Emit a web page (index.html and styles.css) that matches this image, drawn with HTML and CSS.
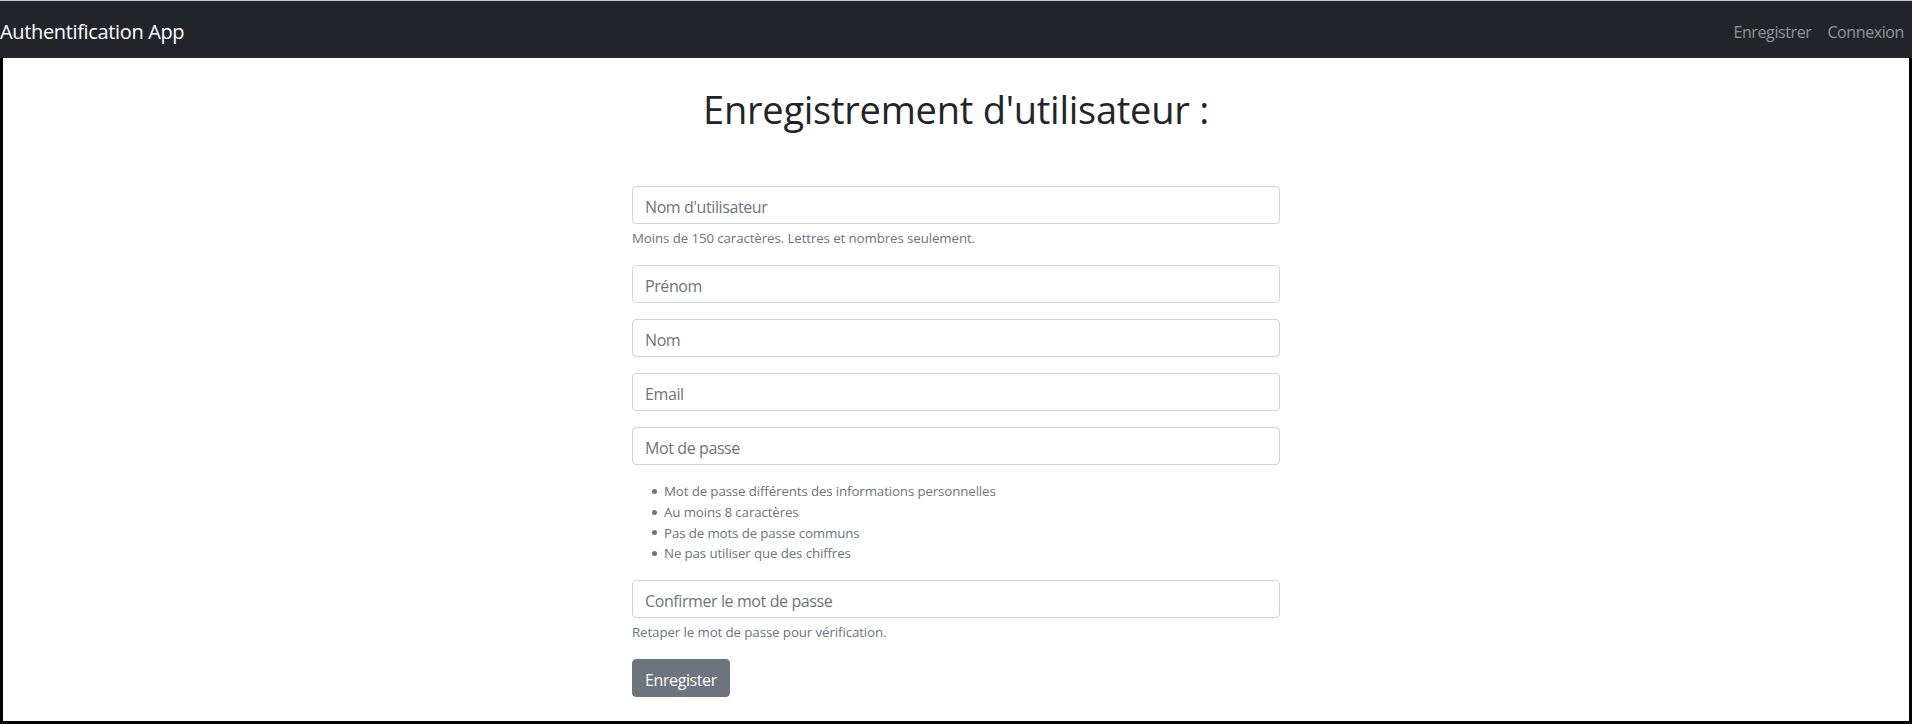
FILE: index.html
```html
<!DOCTYPE html>
<html lang="fr">
<head>
<meta charset="utf-8">
<title>Authentification App</title>
<link rel="stylesheet" href="styles.css">
</head>
<body>
<nav class="navbar">
  <a class="brand" href="#">Authentification App</a>
  <ul class="nav">
    <li><a class="nav-link" href="#">Enregistrer</a></li>
    <li><a class="nav-link" href="#">Connexion</a></li>
  </ul>
</nav>
<main class="frame">
  <h1 class="title">Enregistrement d'utilisateur :</h1>
  <form class="form">
    <div class="group">
      <input class="input" type="text" placeholder="Nom d'utilisateur">
      <small class="help">Moins de 150 caractères. Lettres et nombres seulement.</small>
    </div>
    <div class="group">
      <input class="input" type="text" placeholder="Prénom">
    </div>
    <div class="group">
      <input class="input" type="text" placeholder="Nom">
    </div>
    <div class="group">
      <input class="input" type="email" placeholder="Email">
    </div>
    <div class="group">
      <input class="input" type="password" placeholder="Mot de passe">
      <ul class="help-list">
        <li>Mot de passe différents des informations personnelles</li>
        <li>Au moins 8 caractères</li>
        <li>Pas de mots de passe communs</li>
        <li>Ne pas utiliser que des chiffres</li>
      </ul>
    </div>
    <div class="group">
      <input class="input" type="password" placeholder="Confirmer le mot de passe">
      <small class="help">Retaper le mot de passe pour vérification.</small>
    </div>
    <button class="btn" type="submit">Enregister</button>
  </form>
</main>
</body>
</html>
```

FILE: styles.css
```css
* { box-sizing: border-box; }
html, body { margin: 0; padding: 0; }
body {
  font-family: "Open Sans", "Noto Sans", sans-serif;
  font-size: 16px;
  line-height: 1.5;
  color: #212529;
  background: #ffffff;
  border-top: 1px solid #c9c9c9;
}
.navbar {
  height: 57px;
  padding-top: 4px;
  background: #212529;
  display: flex;
  align-items: center;
  justify-content: space-between;
}
.brand {
  color: #ffffff;
  font-size: 20px;
  line-height: 30px;
  letter-spacing: -0.35px;
  text-decoration: none;
  white-space: nowrap;
}
.nav {
  list-style: none;
  margin: 0;
  padding: 0;
  display: flex;
}
.nav-link {
  display: block;
  padding: 8px;
  color: rgba(255, 255, 255, 0.5);
  letter-spacing: -0.4px;
  text-decoration: none;
}
.frame {
  min-height: calc(100vh - 58px);
  border: 3px solid #000000;
  border-top: 0;
  display: flex;
  flex-direction: column;
  align-items: center;
}
.title {
  margin: 27px 0 0;
  font-size: 38px;
  font-weight: 400;
  line-height: 48px;
  letter-spacing: -0.25px;
}
.form {
  width: 648px;
  margin-top: 53px;
}
.group { margin-bottom: 16px; }
.input {
  display: block;
  width: 100%;
  height: 38px;
  padding: 8px 12px 4px;
  font: inherit;
  letter-spacing: -0.4px;
  color: #495057;
  background: #ffffff;
  border: 1px solid #ced4da;
  border-radius: 4px;
}
.input::placeholder { color: #6c757d; opacity: 1; }
.help {
  display: block;
  margin-top: 4px;
  font-size: 13.3px;
  line-height: 20.7px;
  letter-spacing: -0.1px;
  color: #6c757d;
}
.help-list {
  list-style: none;
  margin: 16.5px 0 0;
  padding-left: 20px;
  font-size: 13.3px;
  line-height: 20.7px;
  letter-spacing: -0.12px;
  color: #6c757d;
}
.help-list li {
  display: flex;
  align-items: center;
}
.help-list li::before {
  content: "";
  flex: none;
  width: 5px;
  height: 5px;
  margin-right: 7px;
  border-radius: 50%;
  background: #6c757d;
}
.btn {
  display: inline-block;
  height: 38px;
  padding: 8px 12px 4px;
  font: inherit;
  letter-spacing: -0.4px;
  color: #ffffff;
  background: #6c757d;
  border: 1px solid #6c757d;
  border-radius: 4px;
}
```
